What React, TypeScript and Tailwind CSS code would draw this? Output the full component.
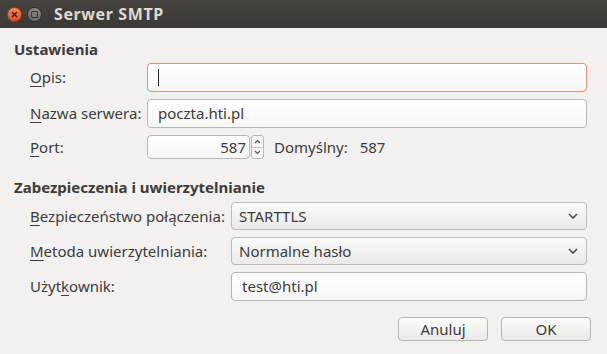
import React from "react";

const font = { fontFamily: '"Noto Sans", "DejaVu Sans", sans-serif' };

function U({ children }: { children: React.ReactNode }) {
  return <span className="underline underline-offset-[3px] decoration-[1px]">{children}</span>;
}

function Field({
  children,
  focused,
  className = "",
}: {
  children?: React.ReactNode;
  focused?: boolean;
  className?: string;
}) {
  return (
    <div
      className={`flex items-center rounded-[4px] border bg-gradient-to-b from-white to-[#f6f6f5] px-[10px] text-[#3c3c3c] ${
        focused ? "border-[#e9906f]" : "border-[#b9b7b3]"
      } ${className}`}
    >
      {children}
    </div>
  );
}

function Chevron() {
  return (
    <svg width="10" height="6" viewBox="0 0 10 6" className="ml-auto mr-[2px]">
      <path d="M1 1l4 4 4-4" fill="none" stroke="#4a4a4a" strokeWidth="1.6" />
    </svg>
  );
}

function Select({ value }: { value: string }) {
  return (
    <div className="flex h-[28px] flex-1 items-center rounded-[4px] border border-[#bdbbb7] bg-gradient-to-b from-[#fafafa] to-[#ebeae8] pl-[7px] pr-[6px] text-[#3c3c3c]">
      {value}
      <Chevron />
    </div>
  );
}

export default function App() {
  return (
    <div className="w-[607px] h-[354px] overflow-hidden bg-[#f2f1f0] text-[15px] text-[#3c3c3c]" style={font}>
      {/* Title bar */}
      <div className="flex h-[28px] items-center bg-gradient-to-b from-[#45443f] to-[#3a3935] pl-[7px]">
        <div className="flex h-[15px] w-[15px] items-center justify-center rounded-full border border-[#9c3a17] bg-gradient-to-b from-[#f58a5c] to-[#df4d1c]">
          <svg width="7" height="7" viewBox="0 0 7 7">
            <path d="M1 1l5 5M6 1l-5 5" stroke="#3b1a0c" strokeWidth="1.4" />
          </svg>
        </div>
        <div className="ml-[5px] flex h-[15px] w-[15px] items-center justify-center rounded-full border border-[#2e2d2a] bg-gradient-to-b from-[#8a8984] to-[#6b6a66]">
          <div className="h-[7px] w-[7px] rounded-[1px] border border-[#3a3936]" />
        </div>
        <span className="ml-[12px] text-[16px] font-bold tracking-[0.6px] text-[#dfdbd2]">Serwer SMTP</span>
      </div>

      <div className="px-[14px] pt-[11px]">
        {/* Ustawienia */}
        <div className="h-[20px] leading-[20px] font-bold">Ustawienia</div>

        <div className="mt-[4px] flex flex-col gap-[7px] pl-[16px] pr-[6px]">
          <div className="flex h-[29px] items-center">
            <span className="w-[117px]">
              <U>O</U>pis:
            </span>
            <Field focused className="h-[29px] flex-1">
              <span className="h-[17px] w-[1px] bg-[#222]" />
            </Field>
          </div>
          <div className="flex h-[29px] items-center">
            <span className="w-[117px]">
              <U>N</U>azwa serwera:
            </span>
            <Field className="h-[29px] flex-1">poczta.hti.pl</Field>
          </div>
          <div className="flex h-[24px] items-center">
            <span className="w-[117px]">
              <U>P</U>ort:
            </span>
            <Field className="h-[24px] w-[103px] justify-end !pr-[3px]">587</Field>
            <div className="ml-[1px] flex h-[24px] w-[13px] flex-col overflow-hidden rounded-[3px] border border-[#b9b7b3] bg-[#f7f7f6]">
              <div className="flex flex-1 items-center justify-center border-b border-[#c9c7c3]">
                <svg width="7" height="5" viewBox="0 0 7 5">
                  <path d="M1 4l2.5-2.5L6 4" fill="none" stroke="#555" strokeWidth="1.2" />
                </svg>
              </div>
              <div className="flex flex-1 items-center justify-center">
                <svg width="7" height="5" viewBox="0 0 7 5">
                  <path d="M1 1l2.5 2.5L6 1" fill="none" stroke="#555" strokeWidth="1.2" />
                </svg>
              </div>
            </div>
            <span className="ml-[10px]">Domyślny:</span>
            <span className="ml-[12px]">587</span>
          </div>
        </div>

        {/* Zabezpieczenia */}
        <div className="mt-[18px] h-[20px] leading-[20px] font-bold">Zabezpieczenia i uwierzytelnianie</div>

        <div className="mt-[5px] flex flex-col gap-[7px] pl-[16px] pr-[6px]">
          <div className="flex h-[28px] items-center">
            <span className="w-[201px]">
              <U>B</U>ezpieczeństwo połączenia:
            </span>
            <Select value="STARTTLS" />
          </div>
          <div className="flex h-[28px] items-center">
            <span className="w-[201px]">
              <U>M</U>etoda uwierzytelniania:
            </span>
            <Select value="Normalne hasło" />
          </div>
          <div className="flex h-[28px] items-center">
            <span className="w-[201px]">
              Użyt<U>k</U>ownik:
            </span>
            <Field className="h-[29px] flex-1">test@hti.pl</Field>
          </div>
        </div>

        {/* Buttons */}
        <div className="mt-[17px] flex justify-end gap-[13px] pr-[2px]">
          <button className="h-[24px] w-[90px] rounded-[4px] border border-[#b7b5b1] bg-gradient-to-b from-[#fbfbfb] to-[#ebeae8] text-[#3c3c3c]">
            Anuluj
          </button>
          <button className="h-[24px] w-[90px] rounded-[4px] border border-[#b7b5b1] bg-gradient-to-b from-[#fbfbfb] to-[#ebeae8] text-[#3c3c3c]">
            OK
          </button>
        </div>
      </div>
    </div>
  );
}
